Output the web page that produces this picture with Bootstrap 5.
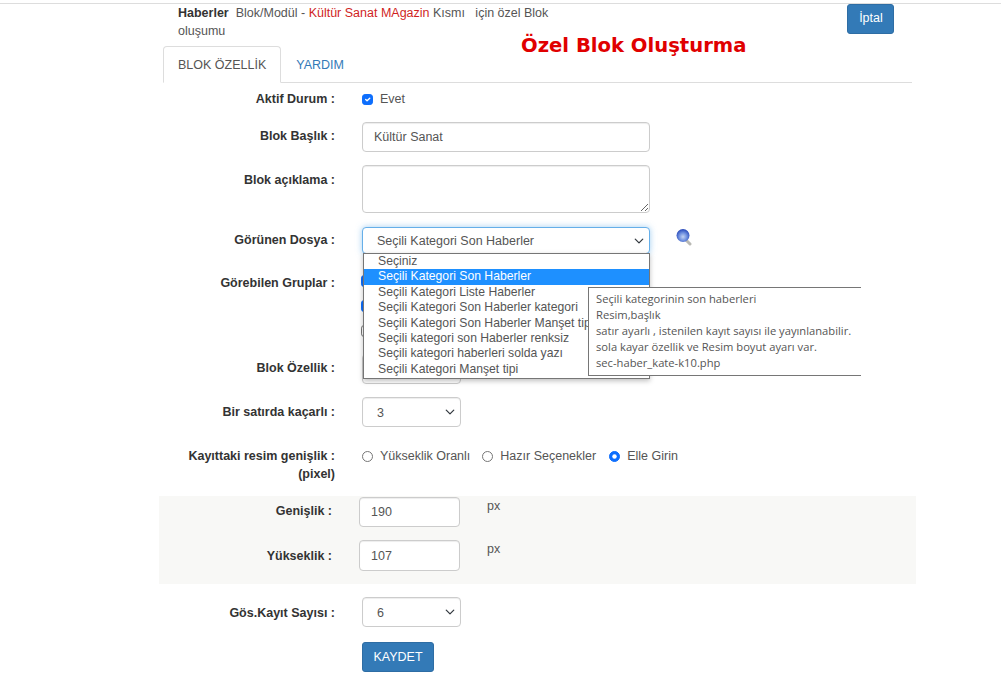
<!DOCTYPE html>
<html lang="tr">
<head>
<meta charset="utf-8">
<title>Özel Blok Oluşturma</title>
<link href="https://cdn.jsdelivr.net/npm/bootstrap@5.3.0/dist/css/bootstrap.min.css" rel="stylesheet">
<style>
body{font-family:"Liberation Sans",Arial,sans-serif;font-size:12.5px;color:#555;background:#fff;margin:0}
.topline{height:4px;border-bottom:1px solid #ddd}
.pagewrap{width:749px;margin-left:163px}
.headrow{height:42px}
.headtext{width:386px;margin-left:15px;line-height:18px;flex:none}
.headtext b{color:#333}
.headred{color:#d01f1f}
.pagetitle{font-family:"DejaVu Sans",Verdana,sans-serif;font-weight:700;font-size:19.6px;line-height:26px;color:#e00000;margin:29px 0 0 -43px;white-space:nowrap;flex:none;height:26px}
.cancelbtn{background:#337ab7;border:1px solid #2e6da4;color:#fff;font-size:12.5px;width:47px;height:30px;padding:0 0 2px;border-radius:3px;margin-left:101px;flex:none}
.tabbar{border-bottom:1px solid #ddd;height:37px}
.tabbar .nav-link{font-size:12.5px;height:37px;padding:9px 14px;color:#337ab7;border-radius:4px 4px 0 0}
.tabbar .nav-link.active{color:#555;border-color:#ddd #ddd #fff}
.frow{display:flex;align-items:flex-start}
.flabel{width:172px;flex:none;text-align:right;font-weight:700;color:#333;line-height:18px}
.lblpad{padding-top:5px}
.lblpad6{padding-top:6px}
.lblpad7{padding-top:7px}
.fctl{margin-left:27px;position:relative}
.wide{width:288px}
.tight{width:99px}
.form-control,.form-select{font-size:12.5px;color:#555;border-color:#ccc;border-radius:4px;box-shadow:inset 0 1px 1px rgba(0,0,0,.075);min-height:0;background-size:12px 10px}
.form-control{background-size:auto}
.wide .form-control{height:30px;padding:4px 11px}
.wide textarea.form-control{height:48px}
.wide .form-select{height:27px;padding:4px 24px 2px 14px;border-color:#66afe9;box-shadow:0 0 6px rgba(102,175,233,.6);background-position:right 4px center}
.tight .form-select{height:30px;padding:5px 20px 3px 14px;background-position:right 4px center}
.form-check-input{width:11px;height:11px;margin:0;flex:none;border-color:#767676}
.form-check-input:checked{background-color:#0d6efd;border-color:#0d6efd}
.checkgroup{height:84px;padding-top:1px}
.checkgroup .form-check-input{display:block;margin:0 0 13px -1px;width:12px;height:12px}
.optlist{position:absolute;left:1px;top:26px;width:287px;background:#fff;border:1px solid #767676;box-shadow:0 2px 5px rgba(0,0,0,.25);padding-bottom:1px;z-index:3}
.optlist div{height:15.4px;line-height:15.4px;padding-left:14px;font-size:12.2px;white-space:nowrap;overflow:hidden}
.optlist .optsel{background:#1e90ff;color:#fff}
.hinttip{position:absolute;left:226px;top:60px;width:273px;height:89px;background:#fff;border:1px solid #767676;border-right:0;padding:3px 7px;font-family:"Open Sans","Noto Sans",sans-serif;font-size:11.2px;line-height:16px;color:#555;white-space:nowrap;z-index:4}
.globeicon{position:absolute;left:313px;top:1px}
.radioline{line-height:18px}
.radioline label{margin:0 12px 0 7px}
.radioline label:nth-of-type(2){margin-right:13px}
.greyband{width:757px;margin-left:-4px;height:88px;background:#f8f8f6;padding-top:1px}
.greyband .flabel{width:173px}
.greyband .fctl{margin-left:27px;width:101px}
.greyband .form-control{height:30px;padding:4px 11px}
.greyband .tallfield{height:31px}
.bandlbl{padding-top:5px}
.unit{margin-left:27px;line-height:18px}
.savebtn{background:#337ab7;border:1px solid #2e6da4;color:#fff;font-size:12.5px;width:72px;height:30px;padding:0;border-radius:3px}
.gap7{margin-top:7px}
.gap13{margin-top:13px}
.gap14{margin-top:14px}
.gap15{margin-top:15px}
.gap20{margin-top:20px}
.gapneg{margin-top:-4px}
</style>
</head>
<body>
<div class="topline"></div>
<div class="pagewrap">
  <div class="headrow d-flex align-items-start">
    <div class="headtext"><b>Haberler</b>&nbsp; Blok/Modül - <span class="headred">Kültür Sanat MAgazin</span> Kısmı &nbsp; için özel Blok oluşumu</div>
    <div class="pagetitle">Özel Blok Oluşturma</div>
    <button type="button" class="btn cancelbtn">İptal</button>
  </div>
  <ul class="nav nav-tabs tabbar">
    <li class="nav-item"><a class="nav-link active" href="#">BLOK ÖZELLİK</a></li>
    <li class="nav-item"><a class="nav-link" href="#">YARDIM</a></li>
  </ul>
  <div class="frow gap7">
    <div class="flabel">Aktif Durum :</div>
    <div class="fctl radioline d-flex align-items-center"><input class="form-check-input" type="checkbox" checked><label>Evet</label></div>
  </div>
  <div class="frow gap14">
    <div class="flabel lblpad">Blok Başlık :</div>
    <div class="fctl wide"><input class="form-control" type="text" value="Kültür Sanat"></div>
  </div>
  <div class="frow gap13">
    <div class="flabel lblpad6">Blok açıklama :</div>
    <div class="fctl wide"><textarea class="form-control"></textarea></div>
  </div>
  <div class="frow gap14">
    <div class="flabel pt-1">Görünen Dosya :</div>
    <div class="fctl wide">
      <select class="form-select"><option>Seçili Kategori Son Haberler</option></select>
      <svg class="globeicon" width="18" height="18" viewBox="0 0 18 18" aria-hidden="true">
        <defs><radialGradient id="globefill" cx="50%" cy="60%" r="55%"><stop offset="0" stop-color="#c3d3f2"/><stop offset=".55" stop-color="#6f90df"/><stop offset="1" stop-color="#2f50bd"/></radialGradient></defs>
        <path d="M10 11l5 5" stroke="#b9b9b4" stroke-width="3" stroke-linecap="round"/>
        <circle cx="8" cy="7.5" r="6.5" fill="url(#globefill)"/>
      </svg>
      <div class="optlist">
        <div>Seçiniz</div>
        <div class="optsel">Seçili Kategori Son Haberler</div>
        <div>Seçili Kategori Liste Haberler</div>
        <div>Seçili Kategori Son Haberler kategori</div>
        <div>Seçili Kategori Son Haberler Manşet tipi</div>
        <div>Seçili kategori son Haberler renksiz</div>
        <div>Seçili kategori haberleri solda yazı</div>
        <div>Seçili Kategori Manşet tipi</div>
      </div>
      <div class="hinttip">Seçili kategorinin son haberleri<br>Resim,başlık<br>satır ayarlı , istenilen kayıt sayısı ile yayınlanabilir.<br>sola kayar özellik ve Resim boyut ayarı var.<br>sec-haber_kate-k10.php</div>
    </div>
  </div>
  <div class="frow gap20">
    <div class="flabel">Görebilen Gruplar :</div>
    <div class="fctl checkgroup">
      <input class="form-check-input" type="checkbox" checked>
      <input class="form-check-input" type="checkbox" checked>
      <input class="form-check-input" type="checkbox">
    </div>
  </div>
  <div class="frow gapneg">
    <div class="flabel lblpad">Blok Özellik :</div>
    <div class="fctl tight"><select class="form-select"><option>&nbsp;</option></select></div>
  </div>
  <div class="frow gap13">
    <div class="flabel lblpad6">Bir satırda kaçarlı :</div>
    <div class="fctl tight"><select class="form-select"><option>3</option></select></div>
  </div>
  <div class="frow gap20">
    <div class="flabel">Kayıttaki resim genişlik :<br>(pixel)</div>
    <div class="fctl d-flex align-items-center radioline">
      <input class="form-check-input" type="radio" name="imgw"><label>Yükseklik Oranlı</label>
      <input class="form-check-input" type="radio" name="imgw"><label>Hazır Seçenekler</label>
      <input class="form-check-input" type="radio" name="imgw" checked><label>Elle Girin</label>
    </div>
  </div>
  <div class="greyband gap13">
    <div class="frow">
      <div class="flabel bandlbl">Genişlik :</div>
      <div class="fctl"><input class="form-control" type="text" value="190"></div>
      <div class="unit">px</div>
    </div>
    <div class="frow gap13">
      <div class="flabel lblpad7">Yükseklik :</div>
      <div class="fctl"><input class="form-control tallfield" type="text" value="107"></div>
      <div class="unit">px</div>
    </div>
  </div>
  <div class="frow gap13">
    <div class="flabel lblpad7">Gös.Kayıt Sayısı :</div>
    <div class="fctl tight"><select class="form-select"><option>6</option></select></div>
  </div>
  <div class="frow gap15">
    <div class="flabel"></div>
    <div class="fctl"><button type="button" class="btn savebtn">KAYDET</button></div>
  </div>
</div>
<script src="https://cdn.jsdelivr.net/npm/bootstrap@5.3.0/dist/js/bootstrap.bundle.min.js"></script>
</body>
</html>
